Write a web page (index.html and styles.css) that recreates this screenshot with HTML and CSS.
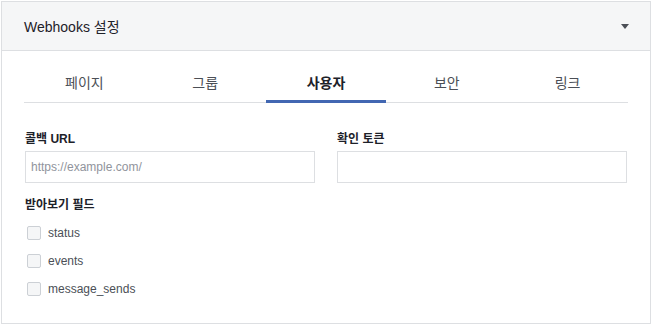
FILE: index.html
```html
<!DOCTYPE html>
<html lang="ko">
<head>
<meta charset="utf-8">
<link rel="stylesheet" href="styles.css">
</head>
<body>
<div class="card">
  <div class="card-header">
    <span class="title">Webhooks 설정</span>
    <span class="caret"></span>
  </div>
  <div class="card-body">
    <div class="tabs">
      <div class="tab">페이지</div>
      <div class="tab">그룹</div>
      <div class="tab active">사용자</div>
      <div class="tab">보안</div>
      <div class="tab">링크</div>
    </div>
    <div class="fields">
      <div class="field">
        <label class="label">콜백 URL</label>
        <input class="input" type="text" placeholder="https://example.com/">
      </div>
      <div class="field">
        <label class="label">확인 토큰</label>
        <input class="input" type="text">
      </div>
    </div>
    <div class="label sub">받아보기 필드</div>
    <div class="checks">
      <label class="check"><span class="box"></span>status</label>
      <label class="check"><span class="box"></span>events</label>
      <label class="check"><span class="box"></span>message_sends</label>
    </div>
  </div>
</div>
</body>
</html>
```
FILE: styles.css
```css
* { box-sizing: border-box; }
html, body { margin: 0; padding: 0; background: #fff; }
body {
  font-family: "Liberation Sans", Arial, "Noto Sans CJK KR", sans-serif;
  padding: 1px 2px 0 1px;
}
.card {
  width: 650px;
  height: 323px;
  border: 1px solid #dddfe2;
  background: #fff;
}
.card-header {
  height: 49px;
  background: #f5f6f7;
  border-bottom: 1px solid #dddfe2;
  display: flex;
  align-items: center;
  justify-content: space-between;
  padding: 0 21px 0 22px;
}
.title {
  font-size: 14px;
  color: #1d2129;
}
.caret {
  width: 0;
  height: 0;
  border-left: 4px solid transparent;
  border-right: 4px solid transparent;
  border-top: 5px solid #4b4f56;
}
.card-body {
  padding: 0 22px 0 22px;
}
.tabs {
  display: flex;
  border-bottom: 1px solid #dddfe2;
}
.tab {
  flex: 1;
  text-align: center;
  font-size: 14px;
  color: #4b4f56;
  padding: 23px 0 0;
  height: 52px;
  line-height: 18px;
  border-bottom: 3px solid transparent;
  margin-bottom: -1px;
}
.tab.active {
  color: #1d2129;
  font-weight: bold;
  border-bottom-color: #4267b2;
}
.fields {
  display: grid;
  grid-template-columns: 290px 290px;
  column-gap: 22px;
  margin: 28px 0 0 1px;
}
.field { display: flex; flex-direction: column; }
.label {
  font-size: 12px;
  font-weight: bold;
  color: #1d2129;
  line-height: 16px;
}
.input {
  margin-top: 4px;
  height: 32px;
  border: 1px solid #dddfe2;
  font-family: inherit;
  font-size: 12px;
  padding: 0 5px;
  color: #1d2129;
  outline: none;
}
.input::placeholder { color: #90949c; }
.sub { margin-top: 14px; padding-left: 1px; }
.checks {
  display: flex;
  flex-direction: column;
  margin-top: 6px;
  padding-left: 3px;
}
.check {
  display: flex;
  align-items: center;
  height: 28px;
  font-size: 12px;
  color: #4b4f56;
}
.box {
  width: 14px;
  height: 14px;
  border: 1px solid #ccd0d5;
  border-radius: 2px;
  background: #f5f6f7;
  margin-right: 7px;
}
```
